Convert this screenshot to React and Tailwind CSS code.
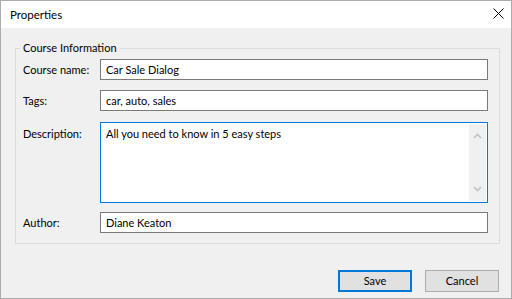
import React from 'react';

function Field({ label, value }) {
    return (
        <div className="flex items-center pl-[3px]">
            <div className="w-[77px] shrink-0 whitespace-nowrap">{label}</div>
            <div className="flex-1 h-[21px] border border-[#7a7a7a] bg-white pl-[5px] flex items-center">
                {value}
            </div>
        </div>
    );
}

function Chevron({ up }) {
    return (
        <svg width="9" height="6" viewBox="0 0 9 6" className="block">
            <path
                d={up ? 'M1 5 L4.5 1.5 L8 5' : 'M1 1 L4.5 4.5 L8 1'}
                fill="none"
                stroke="#c2c2c2"
                strokeWidth="1.6"
            />
        </svg>
    );
}

export default function App() {
    return (
        <div className="w-[512px] h-[299px] border border-[#adadad] bg-[#f0f0f0] flex flex-col text-[11px] leading-[16px] text-black font-['Lato',sans-serif]">
            {/* Title bar */}
            <div className="h-[27px] bg-white flex items-center justify-between pl-[9px] pr-[7px] text-[11.5px]">
                <span>Properties</span>
                <svg width="11" height="11" viewBox="0 0 11 11" className="mb-[2px]">
                    <path d="M0.5 0.5 L10.5 10.5 M10.5 0.5 L0.5 10.5" stroke="#000" strokeWidth="1" />
                </svg>
            </div>

            {/* Body */}
            <div className="flex-1 flex flex-col pt-[12px] pl-[14px] pr-[11px]">
                <fieldset className="border border-[#dcdcdc] pl-[4px] pr-[11px] pb-[10px]">
                    <legend className="px-[3px] leading-[16px]">Course Information</legend>
                    <div className="mt-[3px] flex flex-col">
                        <Field label="Course name:" value="Car Sale Dialog" />
                        <div className="mt-[10px]">
                            <Field label="Tags:" value="car, auto, sales" />
                        </div>
                        <div className="mt-[11px] flex items-start pl-[3px]">
                            <div className="w-[77px] shrink-0 mt-[4px]">Description:</div>
                            <div className="flex-1 h-[81px] border border-[#0078d7] bg-white flex">
                                <div className="flex-1 pl-[5px] pt-[3px]">All you need to know in 5 easy steps</div>
                                <div className="w-[17px] my-[1px] mr-[1px] bg-[#f0f0f0] flex flex-col items-center justify-between py-[9px]">
                                    <Chevron up />
                                    <Chevron />
                                </div>
                            </div>
                        </div>
                        <div className="mt-[9px]">
                            <Field label="Author:" value="Diane Keaton" />
                        </div>
                    </div>
                </fieldset>

                <div className="mt-[26px] flex justify-end gap-[13px] pr-[1px]">
                    <button className="w-[74px] h-[22px] border-2 border-[#0078d7] bg-[#e1e1e1] flex items-center justify-center">
                        Save
                    </button>
                    <button className="w-[74px] h-[22px] border border-[#adadad] bg-[#e1e1e1] flex items-center justify-center">
                        Cancel
                    </button>
                </div>
            </div>
        </div>
    );
}
